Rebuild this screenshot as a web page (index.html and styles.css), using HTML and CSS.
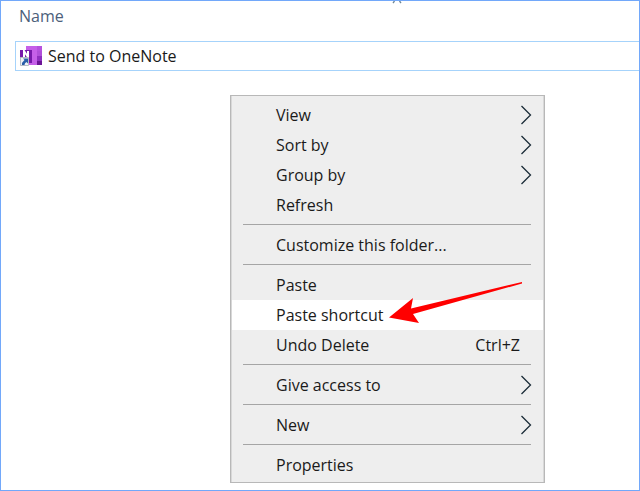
FILE: index.html
```
<!DOCTYPE html>
<html lang="en">
<head>
    <meta charset="UTF-8">
    <meta name="viewport" content="width=device-width, initial-scale=1.0">
    <title>SendTo</title>
    <link rel="stylesheet" href="styles.css">
</head>
<body>
    <main class="explorer">
        <svg class="sort-mark" width="12" height="3" viewBox="0 0 12 3" aria-hidden="true">
            <path d="M1 2L2.500 0M9 2L7.500 0" fill="none" stroke="#6d8799" stroke-width="1.3"/>
        </svg>

        <button class="column-header" type="button">Name</button>

        <ul class="file-list">
            <li>
                <a class="file" href="#">
                    <svg class="file-icon" width="24" height="22" viewBox="0 0 24 22" aria-hidden="true">
                        <path fill="#c55fe8" d="M6 1h16v19H6z"/>
                        <path fill="#b552de" d="M17 1h5v5h-5z"/>
                        <path fill="#b04fd9" d="M17 6h5v5h-5z"/>
                        <path fill="#8f2fc0" d="M17 11h5v5h-5z"/>
                        <path fill="#6c1596" d="M17 16h5v4h-5z"/>
                        <path fill="#7719aa" d="M0 5h12v13H0z"/>
                        <path fill="none" stroke="#fff" stroke-width="2" d="M4 13V6L8 12V6"/>
                        <path fill="#eef1f4" stroke="#b5bcc4" d="M.5 12.500h8v8h-8z"/>
                        <path fill="#2a5ea8" d="M3 13.500h5v5L6.500 17Q4.500 18 4.500 20H2Q1.500 17.500 4.500 15z"/>
                    </svg>
                    <span>Send to OneNote</span>
                </a>
            </li>
        </ul>

        <div class="context-menu" role="menu">
            <button class="item" type="button" role="menuitem">View
                <svg class="chevron" width="12" height="20" viewBox="0 0 12 20" aria-hidden="true"><path d="M1.500 1L10.500 10L1.500 19"/></svg>
            </button>
            <button class="item" type="button" role="menuitem">Sort by
                <svg class="chevron" width="12" height="20" viewBox="0 0 12 20" aria-hidden="true"><path d="M1.500 1L10.500 10L1.500 19"/></svg>
            </button>
            <button class="item" type="button" role="menuitem">Group by
                <svg class="chevron" width="12" height="20" viewBox="0 0 12 20" aria-hidden="true"><path d="M1.500 1L10.500 10L1.500 19"/></svg>
            </button>
            <button class="item" type="button" role="menuitem">Refresh</button>
            <hr class="separator">
            <button class="item" type="button" role="menuitem">Customize this folder...</button>
            <hr class="separator">
            <button class="item" type="button" role="menuitem">Paste</button>
            <button class="item selected" type="button" role="menuitem">Paste shortcut
                <svg class="pointer" width="136" height="44" viewBox="0 0 136 44" aria-hidden="true">
                    <path fill="#f00" d="M1 37.500L25 18L23 28.500L134 2V3.500L25 34L31 43z"/>
                </svg>
            </button>
            <button class="item" type="button" role="menuitem">Undo Delete <span class="shortcut">Ctrl+Z</span></button>
            <hr class="separator">
            <button class="item" type="button" role="menuitem">Give access to
                <svg class="chevron" width="12" height="20" viewBox="0 0 12 20" aria-hidden="true"><path d="M1.500 1L10.500 10L1.500 19"/></svg>
            </button>
            <hr class="separator">
            <button class="item" type="button" role="menuitem">New
                <svg class="chevron" width="12" height="20" viewBox="0 0 12 20" aria-hidden="true"><path d="M1.500 1L10.500 10L1.500 19"/></svg>
            </button>
            <hr class="separator">
            <button class="item" type="button" role="menuitem">Properties</button>
        </div>
    </main>
</body>
</html>
```

FILE: styles.css
```
* {
    box-sizing: border-box;
}
body {
    margin: 0;
    font-family: "Open Sans", "Noto Sans", sans-serif;
    font-size: 16px;
    color: #1a1a1a;
    background-color: #fff;
}
button {
    font: inherit;
    color: inherit;
    background: none;
    border: none;
    padding: 0;
    text-align: left;
}
.explorer {
    position: relative;
    min-height: 100vh;
    padding: 3px 0 0 14px;
    border: 1px solid #72a8fa;
}
.sort-mark {
    position: absolute;
    top: 0;
    left: 391px;
}
.column-header {
    display: block;
    padding-left: 4px;
    line-height: 24px;
    color: #4c607a;
}
.file-list {
    list-style: none;
    margin: 13px 0 0;
    padding: 0;
}
.file {
    display: flex;
    align-items: center;
    gap: 4px;
    height: 30px;
    padding-left: 4px;
    border: 1px solid #a6d3fb;
    border-right: none;
    color: #1a1a1a;
    text-decoration: none;
}
.context-menu {
    position: absolute;
    top: 94px;
    left: 229px;
    width: 315px;
    padding: 4px 1px 2px;
    background-color: #eee;
    border: 1px solid #b8b8b8;
    box-shadow: inset 1px 0 #d8d8d8, inset -1px 0 #d8d8d8;
}
.item {
    position: relative;
    display: flex;
    align-items: center;
    justify-content: space-between;
    width: 100%;
    height: 30px;
    padding: 0 11px 0 44px;
}
.item:hover,
.selected {
    background-color: #fff;
}
.chevron {
    fill: none;
    stroke: #1b2c38;
    stroke-width: 1.3;
}
.shortcut {
    padding-right: 12px;
}
.separator {
    height: 1px;
    margin: 4px 12px 5px 11px;
    border: none;
    background-color: #a5a5a5;
}
/* arrow lies over the neighbouring rows */
.pointer {
    position: absolute;
    right: 19px;
    bottom: 6px;
    z-index: 1;
}
```
